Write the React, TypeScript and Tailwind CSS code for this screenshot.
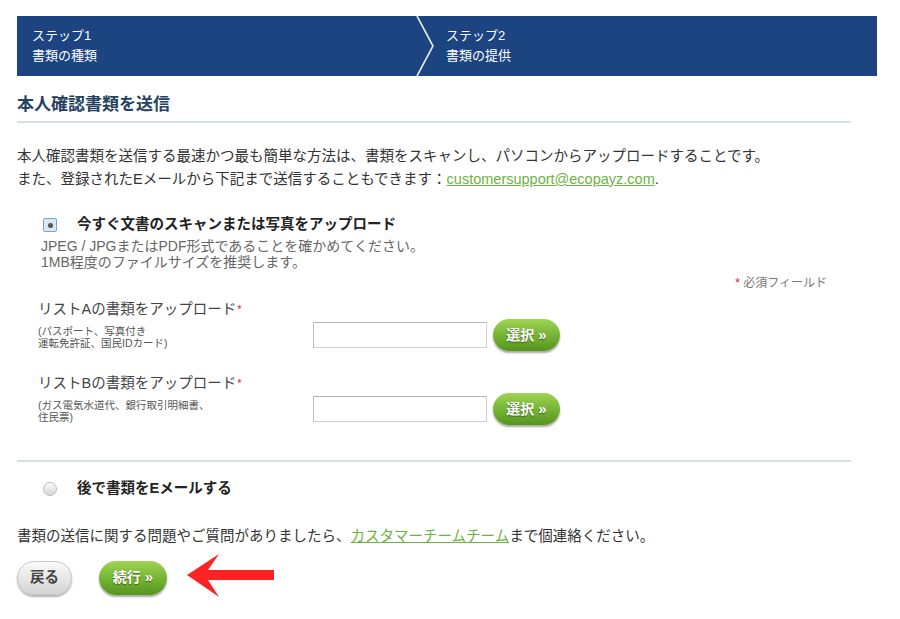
import React from "react";

const font = "font-['Liberation_Sans','Noto_Sans_CJK_JP',sans-serif]";

function GreenButton({ label, className = "" }: { label: string; className?: string }) {
  return (
    <button
      className={`h-[32px] rounded-full bg-gradient-to-b from-[#a0d452] via-[#76b536] to-[#55951c] text-white font-bold text-[14px] [text-shadow:0_1px_1px_rgba(0,0,0,0.45)] shadow-[0_2px_2px_rgba(0,0,0,0.35)] flex items-center justify-center gap-1 ${className}`}
    >
      {label}
      <span className="text-[15px]">»</span>
    </button>
  );
}

function UploadRow({ title, note }: { title: string; note: React.ReactNode }) {
  return (
    <div className="pl-[21px]">
      <div className="text-[14.5px] leading-[20px] text-[#444]">
        {title}
        <span className="text-[#e02020] text-[11px] align-top ml-[1px]">*</span>
      </div>
      <div className="flex items-center h-[32px]">
        <div className="w-[275px] text-[10.5px] leading-[12px] text-[#555] pt-[3px]">{note}</div>
        <input
          type="text"
          className="w-[174px] h-[26px] bg-white border border-[#cfcfcf] border-t-[#b5b5b5] border-l-[#bdbdbd] outline-none"
        />
        <GreenButton label="選択" className="ml-[6px] w-[67px]" />
      </div>
    </div>
  );
}

export default function App() {
  return (
    <div className={`w-[900px] min-h-[619px] bg-white pt-4 pl-[17px] text-[#333] ${font}`}>
      {/* step banner */}
      <div className="w-[860px] h-[60px] bg-[#1b4480] flex text-white text-[13px] leading-[20px]">
        <div className="w-[399px] pl-[15px] flex flex-col justify-center">
          <div>ステップ1</div>
          <div>書類の種類</div>
        </div>
        <svg width="20" height="60" viewBox="0 0 20 60" className="shrink-0">
          <polyline points="1,0 17,30 1,60" fill="none" stroke="#e6ebf2" strokeWidth="1.6" />
        </svg>
        <div className="pl-[10px] flex flex-col justify-center">
          <div>ステップ2</div>
          <div>書類の提供</div>
        </div>
      </div>

      <div className="w-[834px]">
        <h1 className="mt-[18px] pb-[5px] text-[17px] leading-[22px] font-bold text-[#24415f] border-b-2 border-[#d3e2e2]">
          本人確認書類を送信
        </h1>

        <p className="mt-[22px] text-[14.5px] leading-[23px]">
          本人確認書類を送信する最速かつ最も簡単な方法は、書類をスキャンし、パソコンからアップロードすることです。
          <br />
          また、登録されたEメールから下記まで送信することもできます：
          <a className="text-[#6cb33f] underline">customersupport@ecopayz.com</a>.
        </p>

        {/* option 1 */}
        <div className="mt-[24px] flex items-center h-[20px] pl-[26px]">
          <span className="w-[14px] h-[14px] rounded-[2px] border border-[#6fa6de] bg-[#d8e9fa] flex items-center justify-center">
            <span className="w-[9px] h-[9px] rounded-full bg-[#e2e2e2] flex items-center justify-center">
              <span className="w-[5px] h-[5px] rounded-full bg-[#555]" />
            </span>
          </span>
          <span className="ml-[20px] text-[14.5px] font-bold text-[#222]">今すぐ文書のスキャンまたは写真をアップロード</span>
        </div>
        <div className="mt-[3px] pl-[24px] text-[14px] leading-[16px] text-[#666]">
          JPEG / JPGまたはPDF形式であることを確かめてください。
          <br />
          1MB程度のファイルサイズを推奨します。
        </div>

        <div className="mt-[5px] pr-[24px] text-right text-[12px] leading-[16px] text-[#777]">
          <span className="text-[#e02020]">*</span> 必須フィールド
        </div>

        <div className="mt-[8px]">
          <UploadRow
            title="リストAの書類をアップロード"
            note={
              <>
                (パスポート、写真付き
                <br />
                運転免許証、国民IDカード)
              </>
            }
          />
        </div>
        <div className="mt-[22px]">
          <UploadRow
            title="リストBの書類をアップロード"
            note={
              <>
                (ガス電気水道代、銀行取引明細書、
                <br />
                住民票)
              </>
            }
          />
        </div>

        <div className="mt-[35px] border-t-2 border-[#d3e2e2]" />

        {/* option 2 */}
        <div className="mt-[17px] flex items-center h-[20px] pl-[26px]">
          <span className="w-[14px] h-[14px] rounded-full border border-[#bcbcbc] bg-gradient-to-b from-[#fbfbfb] to-[#d6d6d6]" />
          <span className="ml-[20px] text-[14.5px] font-bold text-[#222]">後で書類をEメールする</span>
        </div>

        <p className="mt-[26px] text-[14.5px] leading-[23px]">
          書類の送信に関する問題やご質問がありましたら、
          <a className="text-[#6cb33f] underline">カスタマーチームチーム</a>
          まで個連絡ください。
        </p>

        <div className="mt-[9px] flex items-center">
          <button className="w-[55px] h-[34px] rounded-full bg-gradient-to-b from-[#fafafa] to-[#d4d4d4] border border-[#c8c8c8] shadow-[0_2px_2px_rgba(0,0,0,0.3)] text-[#444] font-bold text-[14.5px]">
            戻る
          </button>
          <GreenButton label="続行" className="ml-[27px] w-[68px] h-[34px]" />
          <svg width="88" height="44" viewBox="0 0 88 44" className="ml-[20px] -mt-[3px]">
            <polygon points="0,21 32,0 21,16 87,16 87,26 21,26 32,43" fill="#fe2323" />
          </svg>
        </div>
      </div>
    </div>
  );
}
